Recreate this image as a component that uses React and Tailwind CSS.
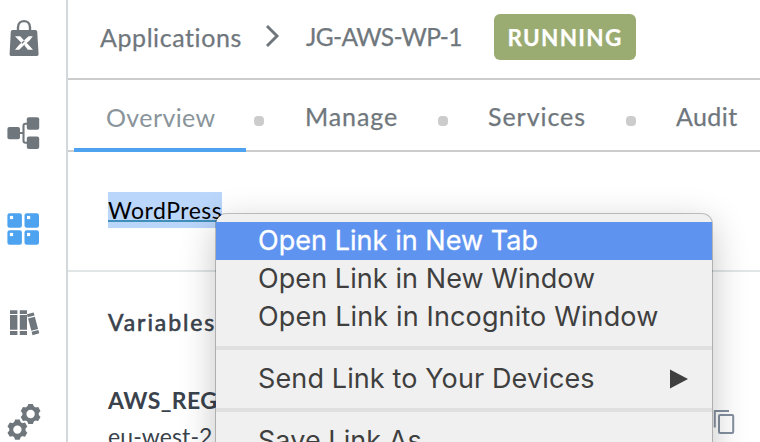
import React from "react";

function BagIcon() {
  return (
    <svg className="block" width="48" height="48" viewBox="0 14 48 48" fill="none">
      <path d="M18 31V27.5C18 19 30 19 30 27.5V31" stroke="#6f777d" strokeWidth="2.4" />
      <path d="M12.5 30H35.5Q37 30 37.2 31.5L38.6 54Q38.6 56 37 56H11Q9.4 56 9.6 54L10.8 31.5Q11 30 12.5 30Z" fill="#6f777d" />
      <path d="M15 36.2H20.2L24.8 41.3L22.3 43.7ZM32.8 36.2H28.6L19 45L15 49.7H19.2L23.3 45.8L29.6 40.4ZM26.6 42.8L33 49.7H27.8L24.4 45.3Z" fill="white" />
    </svg>
  );
}

function NetworkIcon() {
  return (
    <svg className="block" width="48" height="48" viewBox="0 109 48 48" fill="none">
      <path d="M18 133H23.5M29 123.7H25.5Q23.5 123.7 23.5 125.7V140.8Q23.5 142.8 25.5 142.8H29" stroke="#6f777d" strokeWidth="2.1" />
      <g fill="#6f777d">
        <rect x="7.4" y="127" width="12.6" height="12.2" rx="2" />
        <rect x="26.8" y="117.3" width="12.4" height="12.4" rx="2" />
        <rect x="26.8" y="136.6" width="12.4" height="12.4" rx="2" />
      </g>
    </svg>
  );
}

function GridIcon() {
  const cells = [[7.4, 213.3], [24.5, 213.3], [7.4, 230.3], [24.5, 230.3]];
  return (
    <svg className="block" width="48" height="48" viewBox="0 205 48 48">
      {cells.map(([x, y]) => (
        <g key={`${x}-${y}`}>
          <rect x={x} y={y} width="14.5" height="14.5" rx="2.2" fill="#4da3f0" />
          <rect x={x + 2.5} y={y + 2.6} width="3.2" height="3.2" fill="white" />
        </g>
      ))}
    </svg>
  );
}

function BooksIcon() {
  return (
    <svg className="block" width="48" height="48" viewBox="0 298 48 48" fill="#6f777d">
      <path d="M10 310.3H17.4V313.9H10ZM10 315H17.4V329.8H10ZM10 330.9H17.4V335H10Z" />
      <path d="M19.8 310.3H27V313.9H19.8ZM19.8 315H27V329.8H19.8ZM19.8 330.9H27V335H19.8Z" />
      <path transform="translate(33.1 323.8) rotate(-15)" d="M-3.5 -10.8H3.5V-7.6H-3.5ZM-3.5 -6.4H3.5V6.2H-3.5ZM-3.5 7.4H3.5V10.8H-3.5Z" />
    </svg>
  );
}

function Gear({ x, y, turn }) {
  return (
    <g transform={`translate(${x} ${y}) rotate(${turn})`}>
      <circle r="6.2" fill="none" stroke="#6f777d" strokeWidth="4" />
      {[0, 60, 120, 180, 240, 300].map((a) => (
        <path key={a} transform={`rotate(${a})`} d="M-3.4 -7L-2.3 -10.1H2.3L3.4 -7Z" fill="#6f777d" />
      ))}
    </g>
  );
}

function GearsIcon() {
  return (
    <svg className="block" width="48" height="48" viewBox="0 398 48 48">
      <Gear x={30.6} y={414} turn={0} />
      <Gear x={17.4} y={429.6} turn={0} />
    </svg>
  );
}

function Dot() {
  return <span className="mt-[5px] size-[10px] shrink-0 rounded-[4px] bg-[#cccccc]" />;
}

function MenuItem({ children, active, tracking }) {
  return (
    <div className={`flex h-[38px] items-center justify-between pr-6 pl-[42px] text-[27px] leading-[38px] ${active ? "bg-[#5f93f0] text-white [-webkit-text-stroke:0.3px_white]" : "text-[#3f3f3f]"}`}>
      <span className={tracking}>{children}</span>
    </div>
  );
}

export default function App() {
  return (
    <div className="relative flex h-[442px] w-[760px] overflow-hidden bg-white font-['Lato',sans-serif] text-[#6f777d]">
      <nav className="flex h-full w-[68px] shrink-0 flex-col border-r-2 border-[#d3d8dd]">
        <div className="mt-[14px]"><BagIcon /></div>
        <div className="mt-[47px]"><NetworkIcon /></div>
        <div className="mt-[48px]"><GridIcon /></div>
        <div className="mt-[45px]"><BooksIcon /></div>
        <div className="mt-[52px]"><GearsIcon /></div>
      </nav>
      <main className="flex min-w-0 flex-1 flex-col whitespace-nowrap">
        <header className="flex h-[80px] shrink-0 items-center border-b-2 border-[#cccccc] pb-1 pl-8 text-[25px] [-webkit-text-stroke:0.25px_currentColor]">
          <span className="w-[164px] shrink-0 pt-px tracking-[0.58px]">Applications</span>
          <svg className="mt-[-2px] block shrink-0" width="16" height="24" viewBox="0 0 16 24" fill="none" stroke="#6f777d" strokeWidth="2.9">
            <path d="M3 2L13 12L3 22" />
          </svg>
          <span className="ml-[26px] w-[188px] shrink-0 pt-px text-[24.5px] tracking-[-0.65px]">JG-AWS-WP-1</span>
          <span className="flex h-[46px] w-[142px] items-center justify-center rounded-md bg-[#9aac72] pt-px text-[22.5px] font-bold tracking-[1.3px] text-white">RUNNING</span>
        </header>
        <div className="flex h-[72px] shrink-0 border-b-2 border-[#cccccc] pl-[6px] text-[25px] [-webkit-text-stroke:0.25px_currentColor]">
          <div className="flex h-[72px] w-[172px] shrink-0 items-center border-b-4 border-[#4da3f0] pt-[7px] pl-8 text-[#8a949b] [-webkit-text-stroke:0]">
            <span className="tracking-[0.4px]">Overview</span>
          </div>
          <div className="flex h-[68px] items-center pt-2">
            <span className="w-2" /><Dot />
            <span className="-mt-[2px] ml-[41px] w-[133px] tracking-[0.9px]">Manage</span>
            <Dot />
            <span className="-mt-[2px] ml-10 w-[138px] tracking-[0.95px]">Services</span>
            <Dot />
            <span className="-mt-[2px] ml-10 tracking-[0.4px]">Audit</span>
          </div>
        </div>
        <section className="h-[120px] shrink-0 border-b-2 border-[#e1e5e5] pt-10 pl-10">
          <div className="h-9 w-[114px] bg-[#bad6fb] text-[23px] leading-9 text-black">
            <a className="block h-[30px] border-b-2 border-[#3f8fba] tracking-[0.5px]">WordPress</a>
          </div>
        </section>
        <section className="pl-10 text-[23px] text-[#3a424c]">
          <h2 className="mt-[32px] h-9 leading-9 tracking-[1.9px] [-webkit-text-stroke:0.6px_currentColor]">Variables</h2>
          <div className="mt-[42px] flex h-9 items-center leading-9">
            <span className="w-[602px] font-bold tracking-[0.4px]">AWS_REGION</span>
          </div>
          <div className="h-9 leading-9 tracking-[0.1px]">eu-west-2</div>
        </section>
      </main>
      <svg className="absolute top-[408px] left-[712px]" width="24" height="28" viewBox="712 408 24 28" fill="none" stroke="#8490a0" strokeWidth="2">
        <path d="M714.8 427.5V411H729" />
        <rect x="719" y="415" width="14.2" height="18" rx="1" />
      </svg>
      <div className="absolute top-[214px] left-[216px] h-[260px] w-[496px] overflow-visible rounded-t-[10px] bg-[#f0f0f0] font-['Inter',sans-serif] whitespace-nowrap shadow-[0_0_0_1px_rgba(0,0,0,0.22),0_10px_36px_rgba(0,0,0,0.24)]">
        <div className="h-[8px]" />
        <MenuItem active tracking="tracking-[0.05px]">Open Link in New Tab</MenuItem>
        <MenuItem tracking="tracking-[0.08px]">Open Link in New Window</MenuItem>
        <MenuItem tracking="tracking-[0.14px]">Open Link in Incognito Window</MenuItem>
        <div className="mt-[10px] mb-[10px] h-1 bg-[#e0e0e0]" />
        <div className="flex h-[38px] items-center justify-between pr-6 pl-[42px] text-[27px] leading-[38px] text-[#3f3f3f]">
          <span className="tracking-[0.12px]">Send Link to Your Devices</span>
          <svg className="block" width="18" height="20" viewBox="0 0 18 20"><path d="M0 .5L18 10L0 19.5Z" fill="#3f3f3f" /></svg>
        </div>
        <div className="mt-[10px] mb-[10px] h-1 bg-[#e0e0e0]" />
        <MenuItem tracking="tracking-[0.05px]">Save Link As</MenuItem>
      </div>
    </div>
  );
}
